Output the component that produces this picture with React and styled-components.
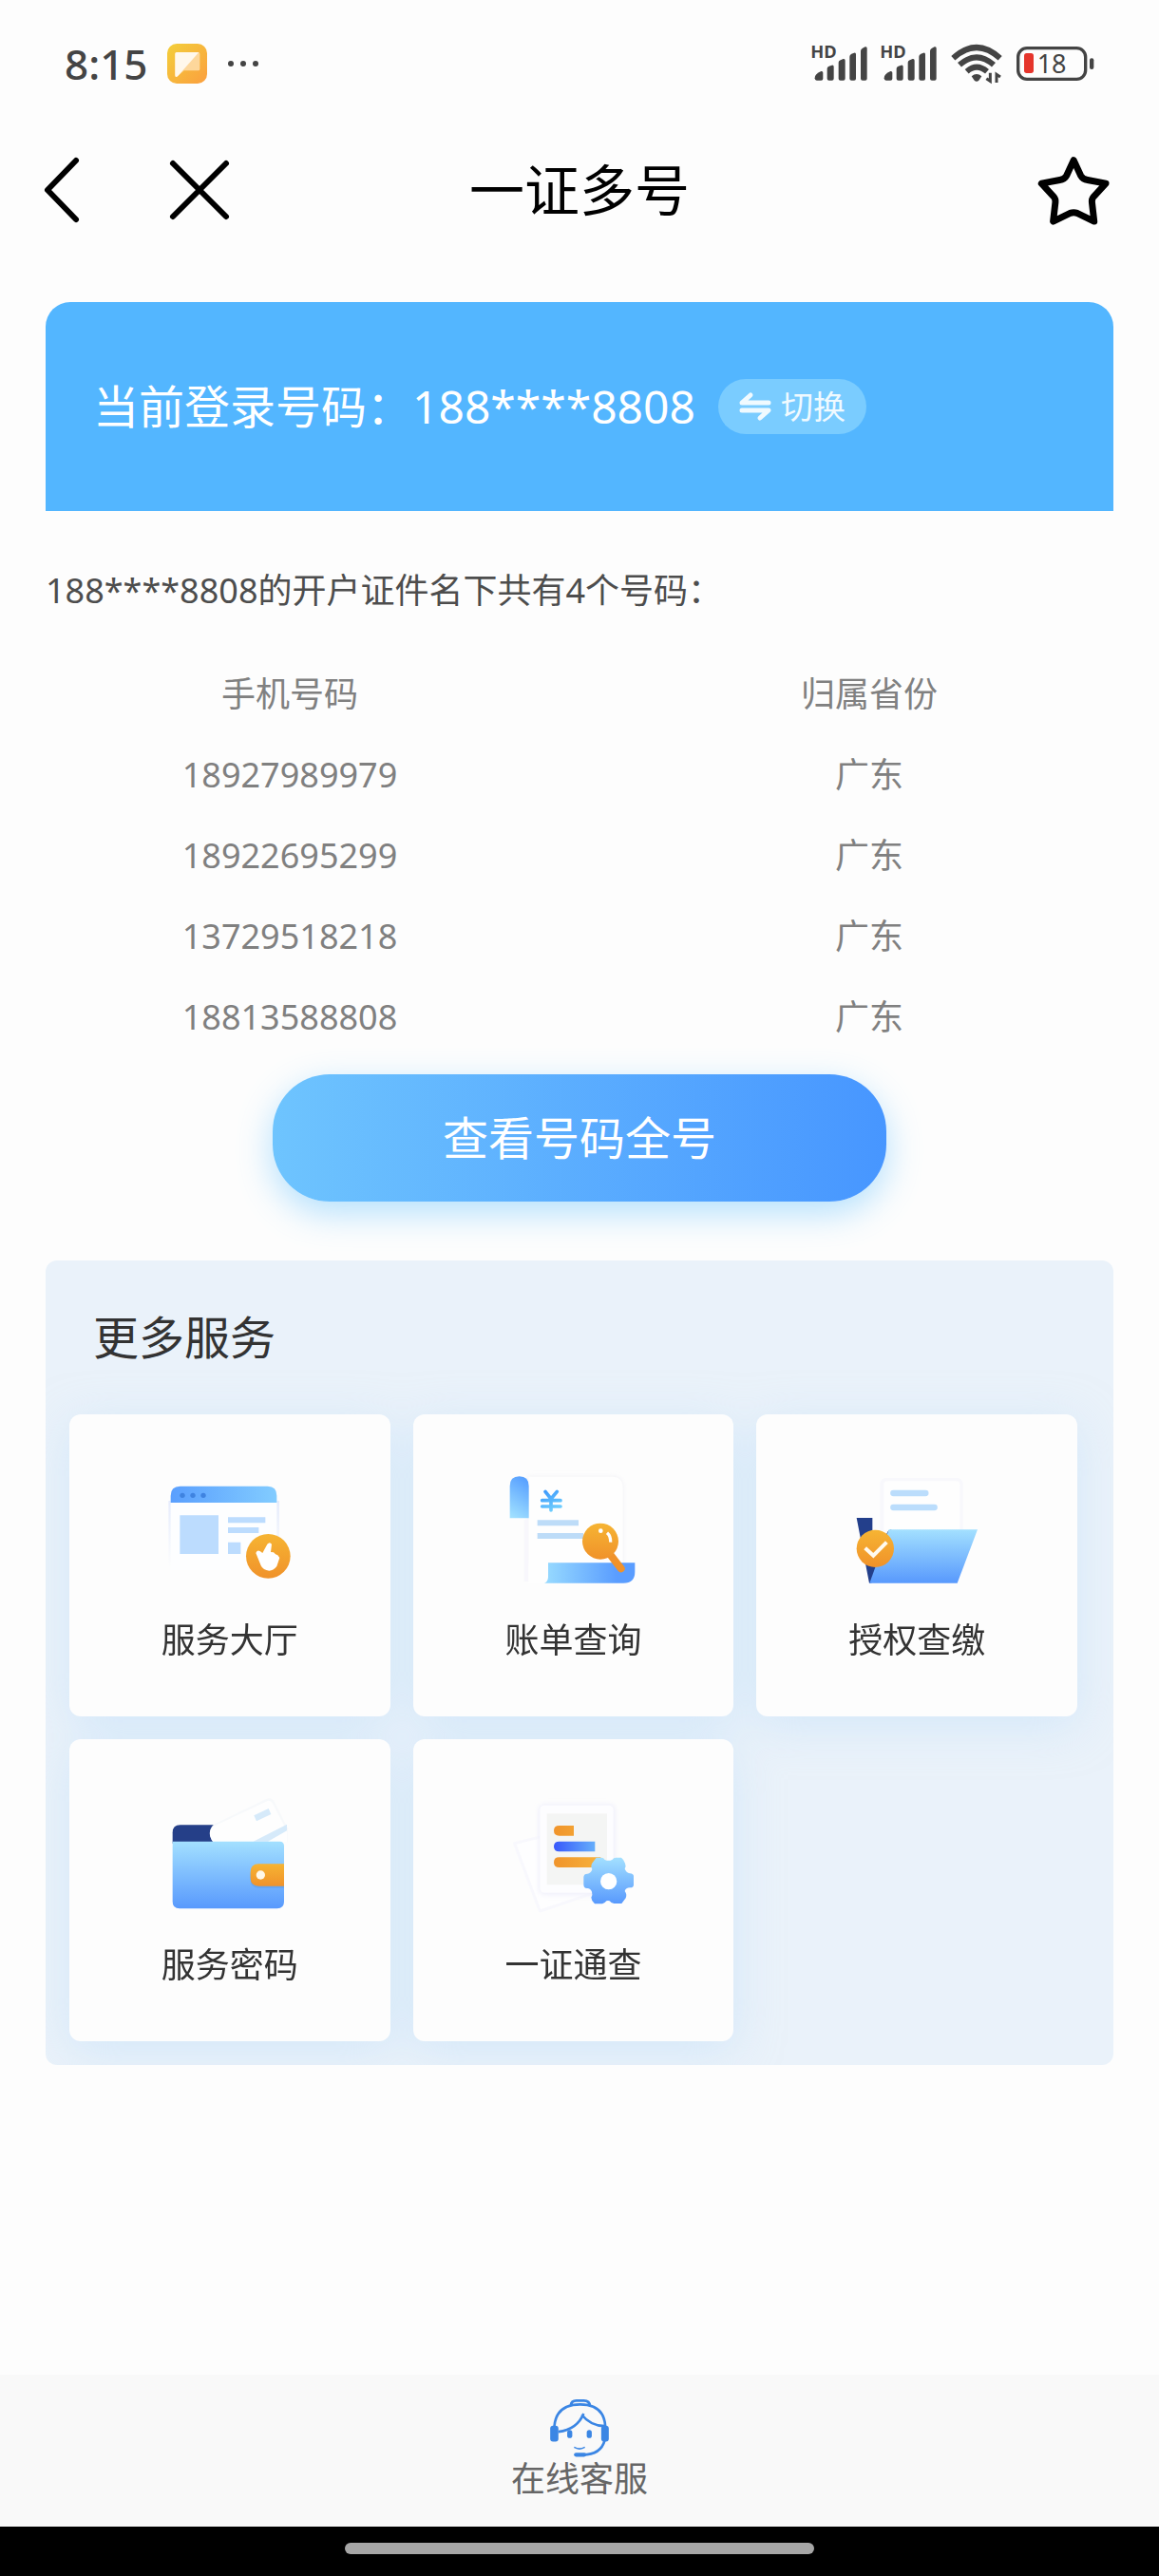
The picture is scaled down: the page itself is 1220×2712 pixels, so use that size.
import React from 'react';
import styled, { createGlobalStyle } from 'styled-components';

const colors = {
  ink: '#333333',
  text: '#4d4d4d',
  muted: '#808080',
  status: '#444444',
  banner: '#53b6ff',
  panel: '#eaf2fa',
  page: '#fdfdfd',
};

const fontSizes = {
  title: '58px',
  lg: '48px',
  time: '44px',
  md: '36px',
  sm: '34px',
};

const GlobalStyle = createGlobalStyle`
  * {
    box-sizing: border-box;
  }
  body {
    margin: 0;
    background: ${colors.page};
    font-family: 'Noto Sans', 'Noto Sans CJK SC', sans-serif;
    line-height: 1.5;
    color: ${colors.ink};
  }
  button {
    padding: 0;
    border: 0;
    background: none;
    color: inherit;
    font: inherit;
    cursor: pointer;
  }
  a {
    color: inherit;
    text-decoration: none;
  }
  svg {
    display: block;
    overflow: visible;
  }
`;

const Page = styled.div`
  display: flex;
  flex-direction: column;
  min-height: 100vh;
`;

const StatusBar = styled.div`
  display: flex;
  align-items: center;
  justify-content: space-between;
  height: 134px;
  padding: 0 68px;
  color: ${colors.status};
`;

const StatusGroup = styled.div`
  display: flex;
  align-items: center;
  gap: ${props => props.$gap};
`;

const Time = styled.span`
  font-size: ${fontSizes.time};
  font-weight: 500;
`;

const NavBar = styled.header`
  display: grid;
  grid-template-columns: 1fr auto 1fr;
  align-items: center;
  height: 132px;
  padding: 0 51px;
  color: #000;
`;

const NavGroup = styled.div`
  display: flex;
  align-items: center;
  justify-content: ${props => (props.$end ? 'flex-end' : 'flex-start')};
  gap: 100px;
`;

const Title = styled.h1`
  margin: 0;
  font-size: ${fontSizes.title};
  font-weight: 400;
  line-height: 84px;
`;

const Content = styled.main`
  flex: 1;
  padding: 52px 0;
`;

const Banner = styled.section`
  display: flex;
  align-items: center;
  gap: 24px;
  height: 220px;
  margin: 0 48px;
  padding: 0 50px;
  border-radius: 26px 26px 0 0;
  background: ${colors.banner};
  color: #fff;
  font-size: ${fontSizes.lg};
`;

const SwitchButton = styled.button`
  display: flex;
  align-items: center;
  gap: 10px;
  height: 58px;
  padding: 0 22px;
  border-radius: 29px;
  background: #7accff;
  color: #f0faff;
  font-size: ${fontSizes.sm};
`;

const Summary = styled.p`
  margin: 56px 48px 38px;
  color: ${colors.text};
  font-size: ${fontSizes.md};
  line-height: 56px;
`;

const NumberTable = styled.table`
  width: 100%;
  border-collapse: collapse;
  table-layout: fixed;
  color: ${colors.muted};
  font-size: ${fontSizes.md};
  text-align: center;
  th,
  td {
    height: 85px;
    padding: 0;
    font-weight: 400;
  }
`;

const PrimaryButton = styled.button`
  display: block;
  width: 53%;
  height: 134px;
  margin: 18px auto 62px;
  border-radius: 60px;
  background: linear-gradient(90deg, #6ec4fe, #4796ff);
  box-shadow: 0 12px 36px rgba(90, 190, 255, 0.45);
  color: #fff;
  font-size: ${fontSizes.lg};
`;

const Panel = styled.section`
  margin: 0 48px;
  padding: 49px 38px 25px 25px;
  border-radius: 12px;
  background: ${colors.panel};
  overflow: hidden;
`;

const PanelTitle = styled.h2`
  margin: 0 0 49px;
  padding-left: 25px;
  font-size: ${fontSizes.lg};
  font-weight: 400;
  line-height: 64px;
`;

const ServiceGrid = styled.div`
  display: grid;
  grid-template-columns: repeat(3, 1fr);
  gap: 24px;
  filter: drop-shadow(0 10px 24px rgba(190, 222, 250, 0.5));
`;

const ServiceCard = styled.a`
  display: flex;
  flex-direction: column;
  align-items: center;
  gap: 18px;
  height: 318px;
  padding-top: 52px;
  border-radius: 12px;
  background: ${colors.page};
  font-size: ${fontSizes.md};
  line-height: 56px;
`;

const SupportBar = styled.footer`
  display: flex;
  justify-content: center;
  padding: 26px 0 27px;
  background: #f9f9f9;
`;

const SupportLink = styled.a`
  display: flex;
  flex-direction: column;
  align-items: center;
  color: #666;
  font-size: ${fontSizes.md};
  line-height: 46px;
`;

const GestureBar = styled.div`
  display: flex;
  align-items: center;
  justify-content: center;
  height: 52px;
  background: #000;
`;

const GestureHandle = styled.div`
  width: 494px;
  max-width: 60%;
  height: 12px;
  margin-bottom: 6px;
  border-radius: 6px;
  background: #a6a6a6;
`;

const NoteAppIcon = () => (
  <svg width="42" height="42" viewBox="0 0 126 126">
    <defs>
      <linearGradient id="note" x1="0" y1="0" x2="1" y2="1">
        <stop offset="0" stopColor="#f3cf3a" />
        <stop offset="1" stopColor="#fb9f3f" />
      </linearGradient>
    </defs>
    <rect width="126" height="126" rx="30" fill="url(#note)" />
    <path d="M30 27h68q5 0 5 5v48q0 5-5 5H53L33 103q-8 5-8-4V32q0-5 5-5z" fill="#fdd79b" />
    <path d="M30 27h70L33 103q-8 5-8-4V32q0-5 5-5z" fill="#fff8ec" />
  </svg>
);

const MoreDots = () => (
  <svg width="34" height="8" viewBox="0 0 34 8" fill="currentColor">
    <circle cx="4" cy="4" r="3" />
    <circle cx="17" cy="4" r="3" />
    <circle cx="30" cy="4" r="3" />
  </svg>
);

const SignalIcon = () => (
  <svg width="58" height="40" viewBox="107 144 174 120" fill="currentColor">
    <text x="102" y="187" fontSize="55" fontWeight="700">
      HD
    </text>
    <path d="M115 250q0-14 20-22q6-1 6 5v18q0 6-6 6h-14q-6 0-6-7z" />
    <path d="M154 219q0-5 6-7l9-3q6-1 6 5v37q0 6-6 6h-9q-6 0-6-6z" />
    <path d="M190 200q0-5 6-7l9-4q6-1 6 5v57q0 6-6 6h-9q-6 0-6-6z" />
    <path d="M225 182q0-6 6-9l8-3q6-2 6 5v76q0 6-6 6h-8q-6 0-6-6z" />
    <path d="M260 164q0-6 6-9l8-4q6-2 6 5v95q0 6-6 6h-8q-6 0-6-6z" />
  </svg>
);

const WifiIcon = () => (
  <svg width="54" height="40" viewBox="536 144 162 120">
    <g fill="none" stroke="currentColor" strokeWidth="18">
      <path d="M543 187q74-68 148 0" />
      <path d="M563 208q54-48 108 0" />
      <path d="M586 229q31-28 64 0" />
    </g>
    <path d="M601 244q16-14 32 0l-9 13q-7 6-14 0z" fill="currentColor" />
    <path d="M660 233v26l-12-8M680 264v-26l12 8" fill="none" stroke="currentColor" strokeWidth="9" />
  </svg>
);

const BatteryIcon = () => (
  <svg width="82" height="36" viewBox="750 147 246 108">
    <rect x="755" y="152" width="213" height="98" rx="28" fill="none" stroke="currentColor" strokeWidth="10" />
    <rect x="774" y="168" width="30" height="63" rx="8" fill="#e5352c" />
    <rect x="981" y="184" width="13" height="35" rx="6" fill="currentColor" />
    <text x="815" y="230" fontSize="81" fill="currentColor">
      18
    </text>
  </svg>
);

const BackIcon = () => (
  <svg width="30" height="64" viewBox="0 0 30 64" fill="none" stroke="currentColor" strokeWidth="6">
    <path d="M29 1L-1 32l30 31" strokeLinecap="round" strokeLinejoin="round" />
  </svg>
);

const CloseIcon = () => (
  <svg width="58" height="58" viewBox="0 0 58 58" fill="none" stroke="currentColor" strokeWidth="6">
    <path d="M1 1l56 56M57 1L1 57" strokeLinecap="round" />
  </svg>
);

const StarIcon = () => (
  <svg width="77" height="75" viewBox="816 486 232 224" fill="none" stroke="currentColor" strokeWidth="21">
    <path
      d="M931 502L953 550Q960 563 975 565L1033 576L995 617Q988 625 989 635L996 696L942 670Q931 666 920 670L866 696L873 635Q874 625 867 617L829 576L887 565Q902 563 909 550Z"
      strokeLinejoin="round"
    />
  </svg>
);

const SwapIcon = () => (
  <svg width="34" height="30" viewBox="0 0 34 30" fill="none" stroke="currentColor" strokeWidth="5">
    <path d="M31 11H3L12 3M3 19h28L22 27" strokeLinecap="round" strokeLinejoin="round" />
  </svg>
);

const HallIcon = () => (
  <svg width="150" height="140" viewBox="81 33 450 420">
    <defs>
      <linearGradient id="hallBar">
        <stop offset="0" stopColor="#5a9ffe" />
        <stop offset="1" stopColor="#82ccff" />
      </linearGradient>
      <linearGradient id="orange" x1="0" y1="0" x2="0" y2="1">
        <stop offset="0" stopColor="#f6b433" />
        <stop offset="1" stopColor="#f0922a" />
      </linearGradient>
      <linearGradient id="hallEdge" x1="0" y1="0" x2="0" y2="1">
        <stop offset="0" stopColor="#e6ecfc" />
        <stop offset="1" stopColor="#fdfdfd" />
      </linearGradient>
    </defs>
    <path d="M112 150h350v210H112z" fill="url(#hallEdge)" />
    <path d="M119 150h335v220H119z" fill="#fdfeff" />
    <path d="M119 156v-22q0-30 30-30h276q29 0 29 30v22z" fill="url(#hallBar)" />
    <g fill="#3f83e0">
      <circle cx="156" cy="133" r="8" />
      <circle cx="189" cy="133" r="8" />
      <circle cx="222" cy="133" r="8" />
    </g>
    <path d="M148 196h122v122H148zM300 202h118v18H300zM300 234h97v18H300zM300 281h40v37h-40z" fill="#bcdcfe" />
    <circle cx="427" cy="325" r="70" fill="url(#orange)" />
    <path
      d="M388 315q4-12 14-5l7 5 15-28q8-9 14 0l-3 25 9 1 6 6 7 3 6 8-9 27q-11 14-24 14-19-1-26-16z"
      fill="#fff"
    />
  </svg>
);

const BillIcon = () => (
  <svg width="150" height="140" viewBox="87 63 450 420">
    <defs>
      <linearGradient id="billRoll" x1="0.5" y1="0" x2="0.2" y2="1">
        <stop offset="0" stopColor="#5aa2ff" />
        <stop offset="1" stopColor="#a0e0ff" />
      </linearGradient>
      <linearGradient id="billBase">
        <stop offset="0" stopColor="#98dbff" />
        <stop offset="0.8" stopColor="#5a9dff" />
      </linearGradient>
      <linearGradient id="yen" x1="0" y1="0" x2="0.5" y2="1">
        <stop offset="0" stopColor="#3c98fb" />
        <stop offset="1" stopColor="#6ccbfd" />
      </linearGradient>
      <filter id="billSoft" x="-20%" y="-20%" width="140%" height="140%">
        <feGaussianBlur stdDeviation="8" />
      </filter>
    </defs>
    <path d="M172 104h266q32 0 32 34v241H172z" fill="#efeff4" filter="url(#billSoft)" />
    <path d="M158 240h14v195h-14z" fill="#f8f7fc" />
    <path d="M172 104h264q34 0 34 36v236H234v64h-62z" fill="#fefefe" />
    <path d="M113 235V134q0-31 30-31t30 31v101z" fill="url(#billRoll)" />
    <path
      d="M225 151l18 23 19-23M215 179h58M215 198h58M243 176v34"
      fill="none"
      stroke="url(#yen)"
      strokeWidth="11"
      strokeLinecap="round"
    />
    <path d="M200 241h130v18H200zM200 282h145v18H200z" fill="#bddcf8" />
    <path d="M234 376h274v28q0 36-36 36H222q12-4 12-20z" fill="url(#billBase)" />
    <path d="M430 350l34 44" stroke="#f0922a" strokeWidth="24" strokeLinecap="round" />
    <circle cx="399" cy="308" r="57" fill="url(#orange)" />
    <circle cx="400" cy="275" r="7" fill="#fff" />
    <path d="M420 281q12 10 11 30" fill="none" stroke="#fff" strokeWidth="10" />
  </svg>
);

const AuthorizeIcon = () => (
  <svg width="150" height="140" viewBox="93 63 450 420">
    <defs>
      <linearGradient id="folder" x1="0" y1="0" x2="0" y2="1">
        <stop offset="0" stopColor="#a3e0ff" />
        <stop offset="1" stopColor="#5899fd" />
      </linearGradient>
    </defs>
    <rect x="202" y="108" width="262" height="190" rx="18" fill="#f8f8fc" />
    <rect x="214" y="118" width="240" height="180" rx="12" fill="#fefefe" />
    <path d="M244 156h102M244 201h130" stroke="#bbddfc" strokeWidth="19" strokeLinecap="round" />
    <path d="M128 234h50v60l60-23-62 168-8 1z" fill="#233f8b" />
    <path d="M178 280l52-9-52 100z" fill="#fdfdfd" />
    <path d="M230 271h280l-64 169H169z" fill="url(#folder)" />
    <circle cx="187" cy="331" r="59" fill="url(#orange)" />
    <path d="M155 329l26 24 42-42" fill="none" stroke="#fffaf0" strokeWidth="12" />
  </svg>
);

const WalletIcon = () => (
  <svg width="150" height="140" viewBox="81 39 450 420">
    <path d="M125 212v-34q0-24 24-24h110v58z" fill="#253f88" />
    <path d="M253 208q-22-32 2-56L420 72q18-8 27 10l42 84v42z" fill="#f7f9fb" />
    <path d="M253 208q-22-32 2-50L420 80q14-8 23 10l44 84v34z" fill="#fefefe" />
    <path d="M382 124l46-22 8 18-46 22zM380 206l106-54v20l-60 34z" fill="#d6eafa" />
    <path d="M125 206h338q14 0 14 14v176q0 22-22 22H147q-22 0-22-22z" fill="url(#folder)" />
    <path d="M477 283h-80q-26 0-26 26v18q0 26 26 26h80z" fill="#4f8fd8" opacity="0.35" />
    <path d="M477 277h-80q-26 0-26 26v18q0 26 26 26h80z" fill="url(#orange)" />
    <circle cx="403" cy="312" r="14" fill="#fff8e8" />
  </svg>
);

const ReportIcon = () => (
  <svg width="150" height="140" viewBox="87 39 450 420">
    <defs>
      <linearGradient id="barOrange">
        <stop offset="0" stopColor="#f0942b" />
        <stop offset="1" stopColor="#f7b23b" />
      </linearGradient>
      <linearGradient id="barBlue">
        <stop offset="0" stopColor="#3858fb" />
        <stop offset="1" stopColor="#65aefb" />
      </linearGradient>
      <filter id="sheetSoft" x="-20%" y="-20%" width="140%" height="140%">
        <feGaussianBlur stdDeviation="8" />
      </filter>
    </defs>
    <path d="M128 212l240-60 60 200-220 74z" fill="#fefeff" stroke="#f8f8fd" strokeWidth="9" strokeLinejoin="round" />
    <rect x="204" y="88" width="242" height="286" rx="18" fill="#f0f0fb" filter="url(#sheetSoft)" />
    <rect x="208" y="92" width="232" height="276" rx="14" fill="#fdfdff" />
    <path d="M230 118h190v225H230z" fill="#f4f5f4" />
    <path d="M315 156h-46q-17 0-17 16t17 16h46zM400 256H269q-17 0-17 16t17 16h131z" fill="url(#barOrange)" />
    <path d="M382 206H269q-17 0-17 16t17 16h113z" fill="url(#barBlue)" />
    <path
      d="M386 257h16q8 0 10 6 12 7 25 0 3-6 11-6h17q8 6 12 18 4 10-1 17 4 14 16 15 12 1 12 9v28q-2 9-12 8-13 0-16 11 8 10 3 22l-13 17h-24q-10-1-14-8-5-2-10 0-6 8-13 9h-24q-10-8-11-20 5-10 2-18-5-12-15-11-11 0-11-12v-24q1-10 12-10 11-1 15-14-6-9-1-18z"
      fill="url(#folder)"
    />
    <circle cx="425" cy="332" r="26" fill="#fff" />
  </svg>
);

const SupportIcon = () => (
  <svg width="62" height="61" viewBox="240 138 186 184" fill="none" stroke="#3b86e4" strokeWidth="8">
    <path d="M253 224q6-70 82-70t80 70M305 157q2-15 18-15h24q18 0 20 18M266 241q60-8 80-58M340 187q28 35 72 36" />
    <path d="M413 268q-12 46-70 46" />
    <path d="M322 314h26" strokeWidth="13" strokeLinecap="round" />
    <path d="M316 290q17 10 34 0" strokeWidth="5" />
    <g fill="#3b86e4" stroke="none">
      <rect x="240" y="222" width="26" height="50" rx="9" />
      <rect x="402" y="222" width="24" height="50" rx="9" />
      <rect x="294" y="235" width="16" height="26" rx="8" />
      <rect x="356" y="235" width="16" height="26" rx="8" />
    </g>
  </svg>
);

const numbers = [
  { phone: '18927989979', province: '广东' },
  { phone: '18922695299', province: '广东' },
  { phone: '13729518218', province: '广东' },
  { phone: '18813588808', province: '广东' },
];

const services = [
  { name: '服务大厅', Icon: HallIcon },
  { name: '账单查询', Icon: BillIcon },
  { name: '授权查缴', Icon: AuthorizeIcon },
  { name: '服务密码', Icon: WalletIcon },
  { name: '一证通查', Icon: ReportIcon },
];

const App = () => (
  <Page lang="zh-CN">
    <GlobalStyle />
    <StatusBar>
      <StatusGroup $gap="21px">
        <Time>8:15</Time>
        <NoteAppIcon />
        <MoreDots />
      </StatusGroup>
      <StatusGroup $gap="15px">
        <SignalIcon />
        <SignalIcon />
        <WifiIcon />
        <BatteryIcon />
      </StatusGroup>
    </StatusBar>
    <NavBar>
      <NavGroup>
        <button type="button" aria-label="返回">
          <BackIcon />
        </button>
        <button type="button" aria-label="关闭">
          <CloseIcon />
        </button>
      </NavGroup>
      <Title>一证多号</Title>
      <NavGroup $end>
        <button type="button" aria-label="收藏">
          <StarIcon />
        </button>
      </NavGroup>
    </NavBar>
    <Content>
      <Banner>
        <span>当前登录号码：188****8808</span>
        <SwitchButton type="button">
          <SwapIcon />
          切换
        </SwitchButton>
      </Banner>
      <Summary>188****8808的开户证件名下共有4个号码：</Summary>
      <NumberTable>
        <thead>
          <tr>
            <th scope="col">手机号码</th>
            <th scope="col">归属省份</th>
          </tr>
        </thead>
        <tbody>
          {numbers.map(({ phone, province }) => (
            <tr key={phone}>
              <td>{phone}</td>
              <td>{province}</td>
            </tr>
          ))}
        </tbody>
      </NumberTable>
      <PrimaryButton type="button">查看号码全号</PrimaryButton>
      <Panel>
        <PanelTitle>更多服务</PanelTitle>
        <ServiceGrid>
          {services.map(({ name, Icon }) => (
            <ServiceCard href="#" key={name}>
              <Icon />
              {name}
            </ServiceCard>
          ))}
        </ServiceGrid>
      </Panel>
    </Content>
    <SupportBar>
      <SupportLink href="#">
        <SupportIcon />
        在线客服
      </SupportLink>
    </SupportBar>
    <GestureBar>
      <GestureHandle />
    </GestureBar>
  </Page>
);

export default App;
